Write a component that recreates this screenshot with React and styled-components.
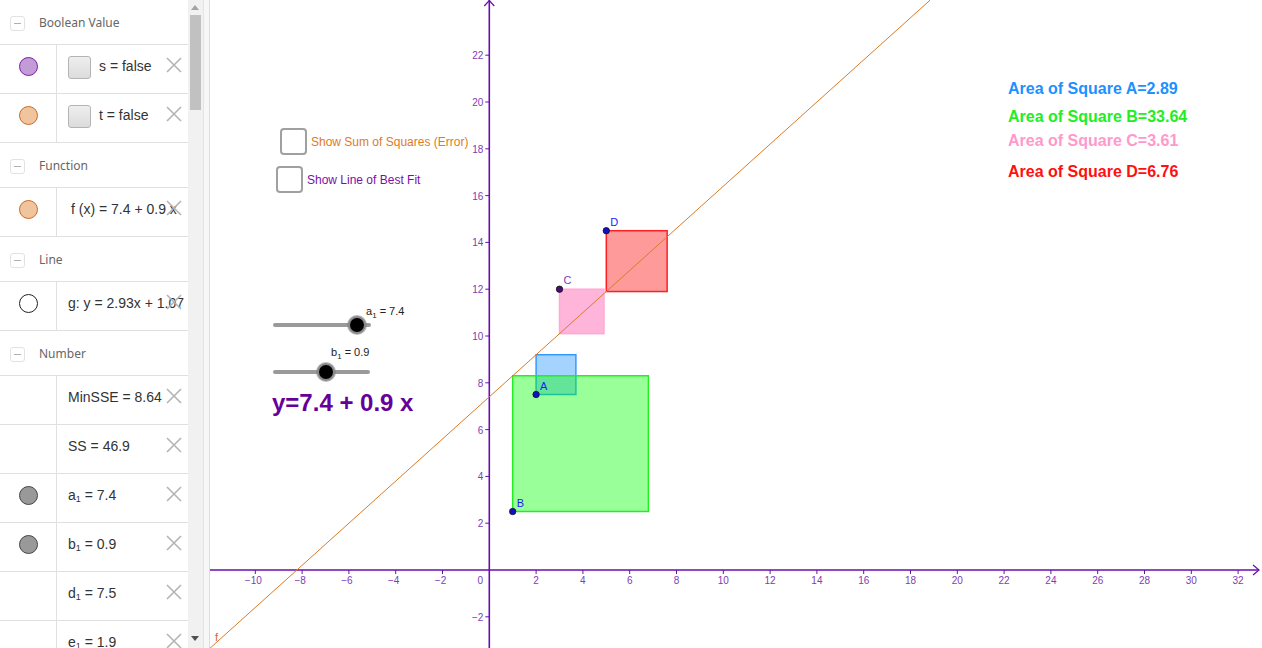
import React from "react"
import styled, { createGlobalStyle } from "styled-components"

const GlobalStyle = createGlobalStyle`
  html, body {
    margin: 0;
    padding: 0;
    background: #fff;
    overflow: hidden;
  }
  #root {
    height: 648px;
  }
`

const X0 = 279.3
const Y0 = 570
const U = 23.4
const px = x => X0 + U * x
const py = y => Y0 - U * y
const f = x => 7.4 + 0.9 * x

const markers = {
  purple: { fill: "#c39bd6", stroke: "#7b1fa2" },
  orange: { fill: "#f0c49c", stroke: "#d2691e" },
  white: { fill: "#fff", stroke: "#222" },
  grey: { fill: "#999", stroke: "#444" },
}

const groups = [
  {
    title: "Boolean Value",
    items: [
      { marker: "purple", check: true, text: <>s = false</> },
      { marker: "orange", check: true, text: <>t = false</> },
    ],
  },
  {
    title: "Function",
    items: [{ marker: "orange", indent: true, text: <>f (x) = 7.4 + 0.9 x</> }],
  },
  {
    title: "Line",
    items: [{ marker: "white", text: <>g: y = 2.93x + 1.07</> }],
  },
  {
    title: "Number",
    items: [
      { text: <>MinSSE = 8.64</> },
      { text: <>SS = 46.9</> },
      { marker: "grey", text: <>a<sub>1</sub> = 7.4</> },
      { marker: "grey", text: <>b<sub>1</sub> = 0.9</> },
      { text: <>d<sub>1</sub> = 7.5</> },
      { text: <>e<sub>1</sub> = 1.9</> },
    ],
  },
]

const squares = [
  { x: 2, y: 7.5, side: 1.7, up: true, fill: "#1e90ff", stroke: "#3399ff", op: 0.4 },
  { x: 1, y: 2.5, side: 5.8, up: true, fill: "#00ff00", stroke: "#22ee22", op: 0.4 },
  { x: 3, y: 12, side: 1.9, up: false, fill: "#ff69b4", stroke: "#ffaad4", op: 0.5 },
  { x: 5, y: 14.5, side: 2.6, up: false, fill: "#ff2020", stroke: "#ff2020", op: 0.45 },
]

const points = [
  { name: "A", x: 2, y: 7.5, fill: "#1010c8", label: "#1a1aff" },
  { name: "B", x: 1, y: 2.5, fill: "#1010c8", label: "#1a1aff" },
  { name: "C", x: 3, y: 12, fill: "#4a0a7a", label: "#7d3cb5" },
  { name: "D", x: 5, y: 14.5, fill: "#1010c8", label: "#1a1aff" },
]

const areas = [
  { text: "Area of Square A=2.89", color: "#1e90ff", top: 80 },
  { text: "Area of Square B=33.64", color: "#22ee22", top: 108 },
  { text: "Area of Square C=3.61", color: "#ff99cc", top: 132 },
  { text: "Area of Square D=6.76", color: "#ff1010", top: 163 },
]

const xTicks = []
for (let v = -10; v <= 32; v += 2) if (v !== 0) xTicks.push(v)
const yTicks = [-2]
for (let v = 2; v <= 22; v += 2) yTicks.push(v)

const fmt = v => (v < 0 ? `\u2212${-v}` : `${v}`)

const CloseIcon = () => (
  <svg width="16" height="16" viewBox="0 0 16 16">
    <path d="M1 1 L15 15 M15 1 L1 15" stroke="#b4b4b4" strokeWidth="1.6" fill="none" />
  </svg>
)

const Plot = () => (
  <PlotSvg viewBox="0 0 1052 648">
    {squares.map(s => {
      const size = s.side * U
      return (
        <rect
          key={s.x}
          x={px(s.x)}
          y={s.up ? py(s.y + s.side) : py(s.y)}
          width={size}
          height={size}
          fill={s.fill}
          fillOpacity={s.op}
          stroke={s.stroke}
          strokeWidth="1.5"
        />
      )
    })}

    <line x1={0} y1={Y0} x2={1049} y2={Y0} stroke="#6a0dad" strokeWidth="1.6" />
    <polyline points="1043,565 1049,570 1043,575" fill="none" stroke="#6a0dad" strokeWidth="1.2" />
    <line x1={X0} y1={0} x2={X0} y2={648} stroke="#6a0dad" strokeWidth="1.6" />
    <polyline points={`${X0 - 5},6 ${X0},0.5 ${X0 + 5},6`} fill="none" stroke="#6a0dad" strokeWidth="1.2" />

    {xTicks.map(v => (
      <g key={v}>
        <line x1={px(v)} y1={Y0} x2={px(v)} y2={Y0 + 4} stroke="#6a0dad" strokeWidth="1" />
        <AxisLabel x={px(v) + (v < 0 ? -2 : 0)} y={Y0 + 14} textAnchor="middle">
          {fmt(v)}
        </AxisLabel>
      </g>
    ))}
    {yTicks.map(v => (
      <g key={v}>
        <line x1={X0 - 4} y1={py(v)} x2={X0} y2={py(v)} stroke="#6a0dad" strokeWidth="1" />
        <AxisLabel x={X0 - 6} y={py(v) + 4} textAnchor="end">
          {fmt(v)}
        </AxisLabel>
      </g>
    ))}
    <AxisLabel x={X0 - 9} y={Y0 + 14} textAnchor="middle">0</AxisLabel>

    <line
      x1={0}
      y1={py(f(-X0 / U))}
      x2={px((Y0 / U - 7.4) / 0.9)}
      y2={0}
      stroke="#d97b2b"
      strokeWidth="1"
    />
    <PointLabel x={5} y={641} fill="#d2691e">f</PointLabel>

    {points.map(p => (
      <g key={p.name}>
        <circle cx={px(p.x)} cy={py(p.y)} r="3.2" fill={p.fill} stroke="#111" strokeWidth="0.8" />
        <PointLabel x={px(p.x) + 4} y={py(p.y) - 5} fill={p.label}>{p.name}</PointLabel>
      </g>
    ))}
  </PlotSvg>
)

const App = () => (
  <>
    <GlobalStyle />
    <Page>
      <AlgebraView>
        <List>
          {groups.map(g => (
            <React.Fragment key={g.title}>
              <GroupHeader>
                <Toggle />
                <GroupTitle>{g.title}</GroupTitle>
              </GroupHeader>
              {g.items.map((item, i) => (
                <ItemRow key={i}>
                  <MarkerCell>
                    {item.marker && (
                      <Marker $fill={markers[item.marker].fill} $stroke={markers[item.marker].stroke} />
                    )}
                  </MarkerCell>
                  <ItemContent $indent={item.indent}>
                    {item.check && <RowCheck />}
                    <ItemText>{item.text}</ItemText>
                  </ItemContent>
                  <Delete>
                    <CloseIcon />
                  </Delete>
                </ItemRow>
              ))}
            </React.Fragment>
          ))}
        </List>
        <Scrollbar>
          <ScrollArrow $dir="up" />
          <ScrollThumb />
          <ScrollArrow $dir="down" />
        </Scrollbar>
        <Splitter />
      </AlgebraView>

      <GraphicsView>
        <Plot />

        <CanvasCheck style={{ left: 70, top: 128 }}>
          <CheckBox />
          <CheckLabel $color="#e07a1f">Show Sum of Squares (Error)</CheckLabel>
        </CanvasCheck>
        <CanvasCheck style={{ left: 66, top: 166 }}>
          <CheckBox />
          <CheckLabel $color="#7b0fa8">Show Line of Best Fit</CheckLabel>
        </CanvasCheck>

        <Slider style={{ left: 63, top: 316 }} $width={98}>
          <SliderCaption style={{ left: 93, top: -11 }}>
            a<sub>1</sub> = 7.4
          </SliderCaption>
          <Knob style={{ left: 75 }} />
        </Slider>
        <Slider style={{ left: 63, top: 363 }} $width={97}>
          <SliderCaption style={{ left: 58, top: -17 }}>
            b<sub>1</sub> = 0.9
          </SliderCaption>
          <Knob style={{ left: 44 }} />
        </Slider>

        <Equation style={{ left: 62, top: 389 }}>y=7.4 + 0.9 x</Equation>

        {areas.map(a => (
          <AreaText key={a.text} $color={a.color} style={{ top: a.top }}>
            {a.text}
          </AreaText>
        ))}
      </GraphicsView>
    </Page>
  </>
)

export default App

const Page = styled.div`
  display: flex;
  width: 1262px;
  height: 648px;
  overflow: hidden;
  font-family: "Noto Sans", "Liberation Sans", sans-serif;
`

const AlgebraView = styled.div`
  display: flex;
  width: 210px;
  flex-shrink: 0;
  height: 100%;
`

const List = styled.div`
  width: 188px;
  height: 100%;
  overflow: hidden;
  background: #fff;
`

const GroupHeader = styled.div`
  display: flex;
  align-items: center;
  height: 44px;
  border-bottom: 1px solid #e0e0e0;
  padding-left: 10px;
  box-sizing: content-box;
`

const Toggle = styled.span`
  width: 15px;
  height: 15px;
  margin-top: 3px;
  border: 1px solid #e2e2e2;
  border-radius: 3px;
  box-sizing: border-box;
  display: flex;
  align-items: center;
  justify-content: center;
  &::after {
    content: "";
    width: 7px;
    height: 1px;
    background: #b0b0b0;
  }
`

const GroupTitle = styled.span`
  margin-left: 14px;
  font-size: 12px;
  color: #666;
`

const ItemRow = styled.div`
  position: relative;
  display: flex;
  height: 48px;
  border-bottom: 1px solid #e0e0e0;
  box-sizing: content-box;
`

const MarkerCell = styled.div`
  width: 57px;
  flex-shrink: 0;
  border-right: 1px solid #e0e0e0;
  display: flex;
  align-items: center;
  justify-content: center;
  padding-bottom: 6px;
  box-sizing: border-box;
`

const Marker = styled.span`
  width: 19px;
  height: 19px;
  border-radius: 50%;
  background: ${p => p.$fill};
  border: 1px solid ${p => p.$stroke};
  box-sizing: border-box;
`

const ItemContent = styled.div`
  flex: 1;
  min-width: 0;
  display: flex;
  align-items: center;
  gap: 8px;
  padding: 0 0 6px ${p => (p.$indent ? "14px" : "11px")};
  overflow: hidden;
  white-space: nowrap;
`

const RowCheck = styled.span`
  width: 23px;
  height: 23px;
  flex-shrink: 0;
  border: 1px solid #b4b4b4;
  border-radius: 3px;
  box-sizing: border-box;
  background: linear-gradient(#eeeeee, #dcdcdc);
  margin-top: 3px;
`

const ItemText = styled.span`
  font-family: "Liberation Sans", Arial, sans-serif;
  font-size: 14px;
  color: #333;
  sub {
    font-size: 9px;
    vertical-align: -2px;
  }
`

const Delete = styled.span`
  position: absolute;
  top: 12px;
  right: 6px;
  display: flex;
`

const Scrollbar = styled.div`
  position: relative;
  width: 15px;
  height: 100%;
  background: #f1f1f1;
  flex-shrink: 0;
`

const ScrollThumb = styled.div`
  position: absolute;
  left: 2px;
  top: 15px;
  width: 11px;
  height: 95px;
  background: #c1c1c1;
`

const ScrollArrow = styled.span`
  position: absolute;
  left: 3px;
  width: 0;
  height: 0;
  border-left: 4.5px solid transparent;
  border-right: 4.5px solid transparent;
  ${p =>
    p.$dir === "up"
      ? `top: 5px; border-bottom: 5px solid #a3a3a3;`
      : `bottom: 7px; border-top: 5px solid #505050;`}
`

const Splitter = styled.div`
  width: 7px;
  height: 100%;
  background: #f7f7f7;
  border-left: 1px solid #e4e4e4;
  border-right: 1px solid #dcdcdc;
  box-sizing: border-box;
  flex-shrink: 0;
`

const GraphicsView = styled.div`
  position: relative;
  flex: 1;
  height: 100%;
  background: #fff;
  overflow: hidden;
`

const PlotSvg = styled.svg`
  display: block;
  width: 1052px;
  height: 648px;
`

const AxisLabel = styled.text`
  font-family: "Liberation Sans", Arial, sans-serif;
  font-size: 10px;
  fill: #7d3cb5;
`

const PointLabel = styled.text`
  font-family: "Liberation Sans", Arial, sans-serif;
  font-size: 11px;
`

const CanvasCheck = styled.div`
  position: absolute;
  display: flex;
  align-items: center;
  gap: 4px;
`

const CheckBox = styled.span`
  width: 27px;
  height: 27px;
  border: 2px solid #a0a0a0;
  border-radius: 4px;
  box-sizing: border-box;
  background: #fff;
`

const CheckLabel = styled.span`
  font-family: "Liberation Sans", Arial, sans-serif;
  font-size: 12px;
  color: ${p => p.$color};
`

const Slider = styled.div`
  position: absolute;
  width: ${p => p.$width}px;
  height: 18px;
  &::before {
    content: "";
    position: absolute;
    left: 0;
    right: 0;
    top: 7px;
    height: 4px;
    border-radius: 2px;
    background: #9a9a9a;
  }
`

const Knob = styled.span`
  position: absolute;
  top: 0;
  width: 14px;
  height: 14px;
  border-radius: 50%;
  background: #000;
  border: 2px solid #8a8a8a;
  box-shadow: 0 0 0 1px rgba(120, 120, 120, 0.5);
`

const SliderCaption = styled.span`
  position: absolute;
  white-space: nowrap;
  font-family: "Liberation Sans", Arial, sans-serif;
  font-size: 11px;
  color: #222;
  sub {
    font-size: 8px;
    vertical-align: -3px;
  }
`

const Equation = styled.div`
  position: absolute;
  font-family: "Liberation Sans", Arial, sans-serif;
  font-weight: bold;
  font-size: 24px;
  color: #660099;
  white-space: nowrap;
`

const AreaText = styled.div`
  position: absolute;
  left: 798px;
  font-family: "Liberation Sans", Arial, sans-serif;
  font-weight: bold;
  font-size: 16px;
  color: ${p => p.$color};
  white-space: nowrap;
`
